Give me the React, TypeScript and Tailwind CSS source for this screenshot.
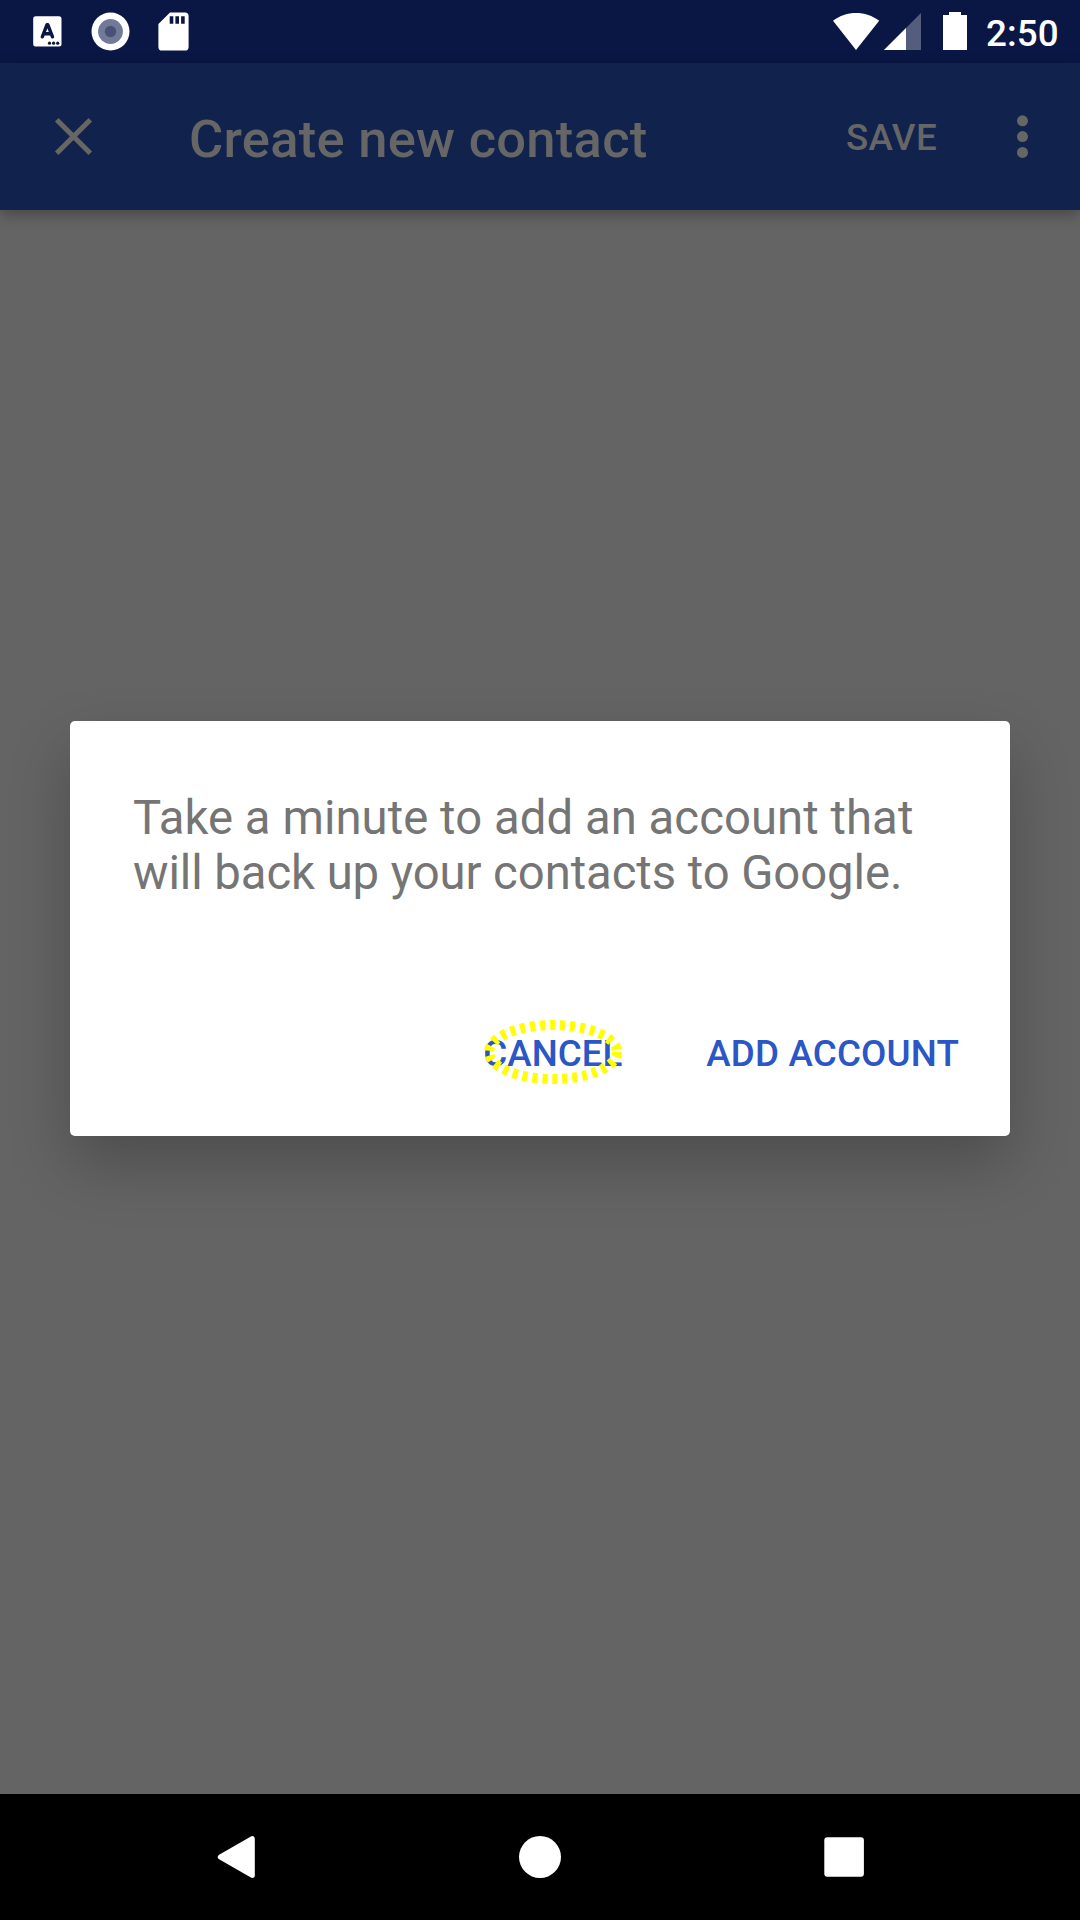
function StatusBar() {
  return (
    <header className="flex h-[63px] shrink-0 items-start bg-[#0a1744]">
      <svg className="h-[63px] w-[200px]" viewBox="0 0 200 63">
        <rect x="33.2" y="16.2" width="28.3" height="30.3" rx="2.5" fill="#fff" />
        <path d="M42.3 36.8 47 24.7h.8l4.7 12.1M44.3 33.8h6.2" fill="none" stroke="#0a1744" strokeWidth="3.4" strokeLinecap="round" strokeLinejoin="round" />
        <circle cx="49.5" cy="43.2" r="1.6" fill="#0a1744" />
        <circle cx="53.6" cy="43.2" r="1.6" fill="#0a1744" />
        <circle cx="57.7" cy="43.2" r="1.6" fill="#0a1744" />
        <circle cx="110.5" cy="31.5" r="19" fill="#fff" />
        <circle cx="110.5" cy="31.5" r="12.4" fill="#737998" />
        <circle cx="110.5" cy="31.5" r="5.7" fill="#4a5175" />
        <path d="M170 12.5h15a3.6 3.6 0 0 1 3.6 3.6v30.8a3.6 3.6 0 0 1-3.6 3.6h-23a3.6 3.6 0 0 1-3.6-3.6V24z" fill="#fff" />
        <path d="M169.7 16.2h3.6v7.6h-3.6zM175.4 16.2h3.6v7.6h-3.6zM181.1 16.2h3.6v7.6h-3.6z" fill="#0a1744" />
      </svg>
      <svg className="ml-auto h-[63px] w-[147px]" viewBox="825 0 147 63">
        <path d="M833 20.8C846 10.4 866 10.4 879.2 20.8L856 50z" fill="#fff" />
        <path d="M921 13v37h-37z" fill="#555d7c" />
        <path d="M906 28v22h-22z" fill="#fff" />
        <path d="M949 12h12v3h6v35h-24V15h6z" fill="#fff" />
      </svg>
      <span className="ml-[14px] mt-[2px] w-[94px] text-[36.75px] leading-[63px] font-medium tracking-[0.1px] text-white">2:50</span>
    </header>
  );
}

function Toolbar() {
  return (
    <div className="relative flex h-[147px] shrink-0 items-start bg-[#11224d] text-[#666666] shadow-[0_5px_13px_rgba(0,0,0,0.28)]">
      <button aria-label="Close" className="h-[147px] w-[147px]">
        <svg className="h-[147px] w-[147px]" viewBox="0 0 147 147">
          <path d="M56.7 56.7 90.3 90.3M90.3 56.7 56.7 90.3" stroke="#666666" strokeWidth="5.1" />
        </svg>
      </button>
      <h1 className="ml-[42px] mt-[3px] text-[52.5px] leading-[147px] font-medium tracking-[0.26px] whitespace-nowrap">Create new contact</h1>
      <button className="mt-px ml-auto text-[36.75px] leading-[147px] font-medium tracking-[0.35px]">SAVE</button>
      <button aria-label="More options" className="ml-[33px] h-[147px] w-[110px]">
        <svg className="h-[147px] w-[110px]" viewBox="970 63 110 147" fill="#666666">
          <circle cx="1022.5" cy="120.8" r="5.5" />
          <circle cx="1022.5" cy="136.6" r="5.5" />
          <circle cx="1022.5" cy="152.4" r="5.5" />
        </svg>
      </button>
    </div>
  );
}

function Dialog() {
  return (
    <div role="dialog" className="mt-[511px] flex h-[415px] w-[940px] flex-col rounded-[5px] bg-white shadow-[0_28px_62px_rgba(0,0,0,0.23)]">
      <p className="mt-[70px] ml-[63px] text-[47.25px] leading-[55px] whitespace-nowrap text-[#757575]">
        <span className="tracking-[0.06px]">Take a minute to add an account that</span>
        <br />
        <span className="tracking-[-0.07px]">will back up your contacts to Google.</span>
      </p>
      <div className="mt-[103px] mr-[51px] flex justify-end gap-[84px] text-[36.75px] leading-[100px] font-medium text-[#2a56c6]">
        <button className="relative">
          CANCEL
          <svg className="absolute top-[12px] -left-[4px] h-[72px] w-[150px]" viewBox="479 1016 150 72">
            <ellipse cx="553" cy="1052" rx="64" ry="27" fill="none" stroke="#ffff00" strokeWidth="10" strokeDasharray="5 5" />
          </svg>
        </button>
        <button className="tracking-[0.16px]">ADD ACCOUNT</button>
      </div>
    </div>
  );
}

function NavigationBar() {
  return (
    <nav className="h-[126px] shrink-0 bg-black">
      <svg className="h-[126px] w-[1080px]" viewBox="0 1794 1080 126" fill="#fff">
        <path d="M220.4 1857 252.2 1838.7v36.6z" stroke="#fff" strokeWidth="5.2" strokeLinejoin="round" />
        <circle cx="540" cy="1857" r="21" />
        <rect x="824.3" y="1837.2" width="39.6" height="39.6" rx="3" />
      </svg>
    </nav>
  );
}

export default function App() {
  return (
    <div className="flex h-[1920px] w-[1080px] flex-col overflow-hidden bg-[#646464] font-['Roboto',sans-serif]">
      <StatusBar />
      <Toolbar />
      <main className="flex grow flex-col items-center">
        <Dialog />
      </main>
      <NavigationBar />
    </div>
  );
}
